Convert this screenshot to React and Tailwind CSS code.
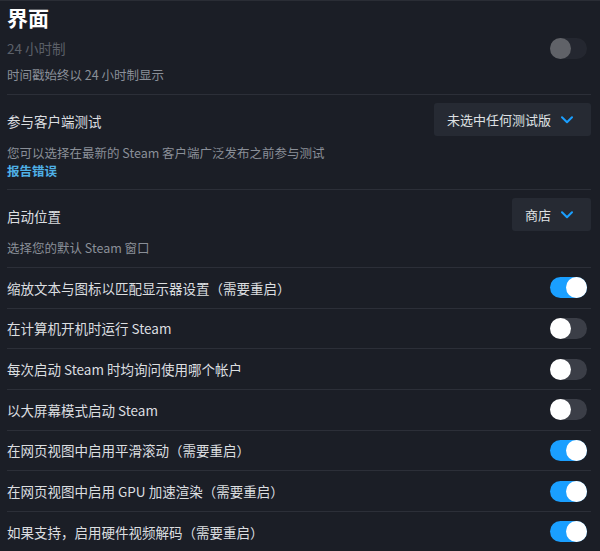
import React from "react";

const font = { fontFamily: '"Noto Sans CJK SC", "Noto Sans", sans-serif' };

function Toggle({ on, disabled }) {
  return (
    <div className={`relative w-[37px] h-[21px] rounded-full ${on ? "bg-[#1a9fff]" : "bg-[#3b3e47]"} ${disabled ? "opacity-30" : ""}`}>
      <div className={`absolute top-0 w-[21px] h-[21px] rounded-full bg-white ${on ? "right-0" : "left-0"}`} />
    </div>
  );
}

function Chevron() {
  return (
    <svg width="12" height="8" viewBox="0 0 12 8" fill="none">
      <path d="M1 1.3 L6 6.3 L11 1.3" stroke="#1a9fff" strokeWidth="2" strokeLinecap="round" strokeLinejoin="round" />
    </svg>
  );
}

function Dropdown({ label }) {
  return (
    <div className="h-[33px] flex items-center gap-[10px] pl-[13px] pr-[18px] bg-[#262a33] rounded-[3px] text-[13px] text-[#dfe1e3]">
      <span>{label}</span>
      <Chevron />
    </div>
  );
}

const rows = [
  ["缩放文本与图标以匹配显示器设置（需要重启）", true],
  ["在计算机开机时运行 Steam", false],
  ["每次启动 Steam 时均询问使用哪个帐户", false],
  ["以大屏幕模式启动 Steam", false],
  ["在网页视图中启用平滑滚动（需要重启）", true],
  ["在网页视图中启用 GPU 加速渲染（需要重启）", true],
  ["如果支持，启用硬件视频解码（需要重启）", true],
];

export default function App() {
  return (
    <div style={font} className="w-[600px] h-[551px] overflow-hidden bg-[#1b1e26] border-t border-[#2a2d35]">
      <div className="pl-[7px] pr-[9px]">
        <div className="h-[33px] flex items-center text-[21px] font-bold text-white leading-none">界面</div>

        <div className="border-b border-[#2c2f38] pb-[10px]">
          <div className="h-[28px] flex items-center justify-between">
            <span className="text-[13.5px] text-[#5b6069]">24 小时制</span>
            <div className="mr-[4px]"><Toggle on={false} disabled /></div>
          </div>
          <div className="mt-[4px] h-[18px] flex items-center text-[12.5px] text-[#8a8f98]">时间戳始终以 24 小时制显示</div>
        </div>

        <div className="border-b border-[#2c2f38] pt-[8px] pb-[9px]">
          <div className="h-[33px] flex items-center justify-between">
            <span className="text-[13.5px] text-[#dcdee0] mt-[3px]">参与客户端测试</span>
            <Dropdown label="未选中任何测试版" />
          </div>
          <div className="mt-[8px] h-[18px] flex items-center text-[12.5px] text-[#8a8f98]">您可以选择在最新的 Steam 客户端广泛发布之前参与测试</div>
          <div className="h-[18px] flex items-center text-[12.5px] font-bold text-[#4fb0e6]">报告错误</div>
        </div>

        <div className="border-b border-[#2c2f38] pt-[8px] pb-[10px]">
          <div className="h-[33px] flex items-center justify-between">
            <span className="text-[13.5px] text-[#dcdee0] mt-[3px]">启动位置</span>
            <Dropdown label="商店" />
          </div>
          <div className="mt-[8px] h-[18px] flex items-center text-[12.5px] text-[#8a8f98]">选择您的默认 Steam 窗口</div>
        </div>

        {rows.map(([label, on], i) => (
          <div key={i} className="h-[40.67px] border-b border-[#2c2f38] flex items-center justify-between">
            <span className="text-[13.5px] text-[#dcdee0]">{label}</span>
            <div className="mr-[4px]"><Toggle on={on} /></div>
          </div>
        ))}
      </div>
    </div>
  );
}
